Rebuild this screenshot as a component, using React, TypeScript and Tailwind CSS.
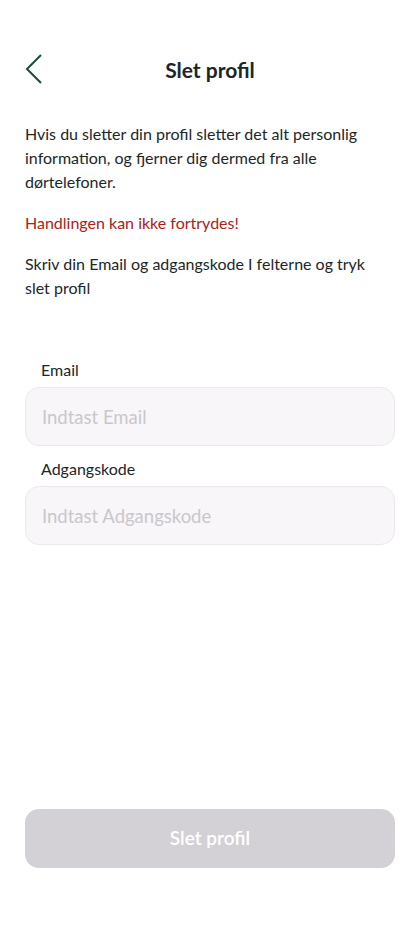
export default function App() {
  return (
    <div className="min-h-[933px] w-full bg-white flex flex-col px-[25px] font-['Lato',sans-serif] text-[#1c2628]">
      {/* Header */}
      <div className="relative flex items-center justify-center h-[40px] mt-[50px]">
        <button className="absolute left-0 top-[4px] text-[#1d4a40]">
          <svg width="18" height="30" viewBox="0 0 18 30" fill="none" stroke="currentColor" strokeWidth="2">
            <path d="M16 1 L2 15 L16 29" />
          </svg>
        </button>
        <h1 className="text-[21px] font-bold">Slet profil</h1>
      </div>

      {/* Text */}
      <div className="mt-[32px] pr-[15px] text-[16px] leading-[24px]">
        <p>Hvis du sletter din profil sletter det alt personlig information, og fjerner dig dermed fra alle dørtelefoner.</p>
        <p className="mt-[17px] text-[#a82219]">Handlingen kan ikke fortrydes!</p>
        <p className="mt-[17px]">Skriv din Email og adgangskode I felterne og tryk slet profil</p>
      </div>

      {/* Form */}
      <div className="mt-[58px] flex flex-col">
        <label className="px-[16px] text-[16px] leading-[24px]">Email</label>
        <input
          placeholder="Indtast Email"
          className="mt-[5px] h-[59px] rounded-[14px] border border-[#ebe9ec] bg-[#f8f6f9] px-[16px] text-[18.5px] placeholder:text-[#c9c7cb] outline-none"
        />
        <label className="mt-[11px] px-[16px] text-[16px] leading-[24px]">Adgangskode</label>
        <input
          type="password"
          placeholder="Indtast Adgangskode"
          className="mt-[5px] h-[59px] rounded-[14px] border border-[#ebe9ec] bg-[#f8f6f9] px-[16px] text-[18.5px] placeholder:text-[#c9c7cb] outline-none"
        />
      </div>

      <div className="flex-1" />

      <button className="mb-[65px] h-[59px] rounded-[14px] bg-[#d3d1d5] text-white text-[19px] font-semibold">
        Slet profil
      </button>
    </div>
  );
}
